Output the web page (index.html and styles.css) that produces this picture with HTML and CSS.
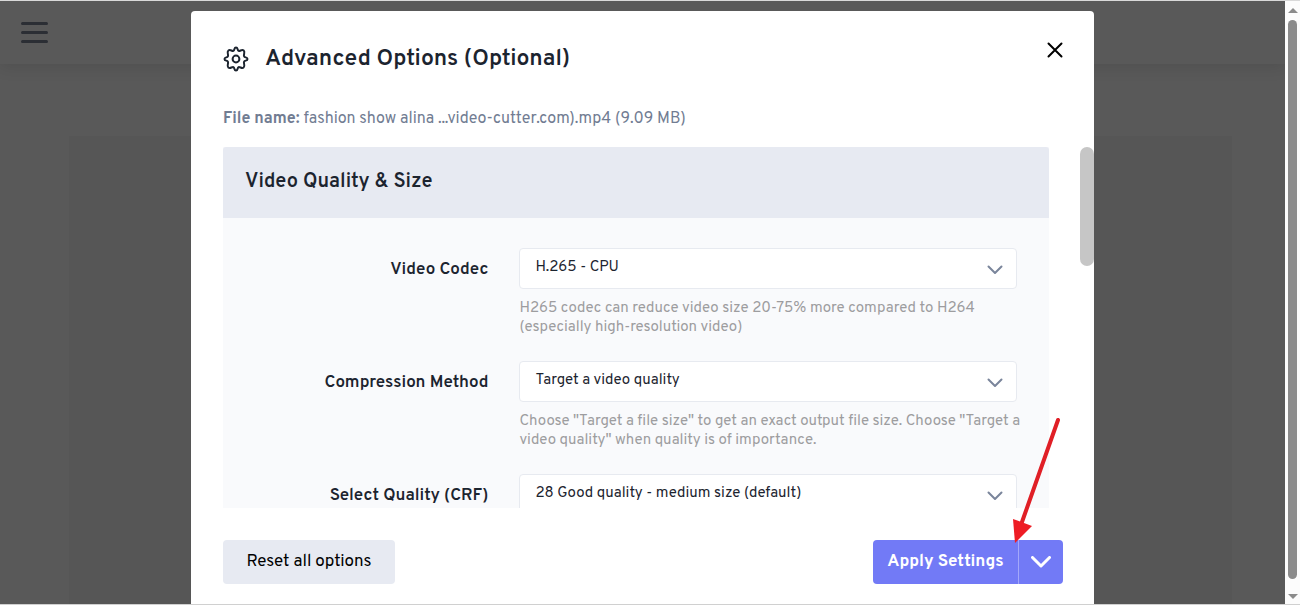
FILE: index.html
```
<!DOCTYPE html>
<html lang="en">
<head>
	<meta charset="UTF-8">
	<title>Advanced Options</title>
	<link rel="stylesheet" href="styles.css">
</head>
<body>
	<div class="page">
		<header class="topbar">
			<button class="menu-btn" type="button" aria-label="Menu"><span></span><span></span><span></span></button>
		</header>
		<main class="content"></main>
		<div class="overlay">
			<form class="modal" role="dialog" aria-labelledby="modal-title">
				<div class="modal-header">
					<svg class="gear" viewBox="0 0 26 26" aria-hidden="true">
						<path d="M10.4 4.9 C11.8 4.2 10.9 1.5 13 1.5 S14.2 4.2 15.6 4.9 C17.2 5.4 18.9 2.9 20.7 4.6 S20.2 8.6 21.1 10.4 C21.8 11.8 24.5 10.9 24.5 13 S21.8 14.2 21.1 15.6 C20.2 17.4 22.5 19.6 20.7 21.4 S17.2 20.6 15.6 21.1 C14.2 21.8 15.1 24.5 13 24.5 S11.8 21.8 10.4 21.1 C8.8 20.6 7.1 23.1 5.3 21.4 S5.8 17.4 4.9 15.6 C4.2 14.2 1.5 15.1 1.5 13 S4.2 11.8 4.9 10.4 C5.8 8.6 3.5 6.4 5.3 4.6 S8.8 5.4 10.4 4.9 Z"/>
						<circle cx="13" cy="13" r="3.4"/>
					</svg>
					<h2 id="modal-title">Advanced Options (Optional)</h2>
					<button class="close-btn" type="button" aria-label="Close">
						<svg viewBox="0 0 16 16"><path d="M1.5 1.5 L14.5 14.5 M14.5 1.5 L1.5 14.5"/></svg>
					</button>
				</div>
				<p class="file-name"><b>File name:</b> fashion show alina ...video-cutter.com).mp4 (9.09 MB)</p>
				<div class="modal-body">
					<section class="options">
						<h3>Video Quality &amp; Size</h3>
						<div class="option">
							<label for="codec">Video Codec</label>
							<div class="field">
								<div class="select-box">
									<select id="codec"><option>H.265 - CPU</option></select>
									<svg class="chevron" viewBox="0 0 16 10"><path d="M1.5 1.5 L8 8 L14.5 1.5"/></svg>
								</div>
								<p class="hint">H265 codec can reduce video size 20-75% more compared to H264 (especially high-resolution video)</p>
							</div>
						</div>
						<div class="option">
							<label for="method">Compression Method</label>
							<div class="field">
								<div class="select-box">
									<select id="method"><option>Target a video quality</option></select>
									<svg class="chevron" viewBox="0 0 16 10"><path d="M1.5 1.5 L8 8 L14.5 1.5"/></svg>
								</div>
								<p class="hint">Choose "Target a file size" to get an exact output file size. Choose "Target a video quality" when quality is of importance.</p>
							</div>
						</div>
						<div class="option">
							<label for="crf">Select Quality (CRF)</label>
							<div class="field">
								<div class="select-box">
									<select id="crf"><option>28 Good quality - medium size (default)</option></select>
									<svg class="chevron" viewBox="0 0 16 10"><path d="M1.5 1.5 L8 8 L14.5 1.5"/></svg>
								</div>
							</div>
						</div>
					</section>
					<div class="modal-scroll"></div>
				</div>
				<div class="modal-footer">
					<button class="reset-btn" type="button">Reset all options</button>
					<div class="apply">
						<button class="apply-btn" type="submit">Apply Settings</button>
						<button class="apply-more" type="button" aria-label="More">
							<svg viewBox="0 0 20 12"><path d="M1.5 1.5 L10 10 L18.5 1.5"/></svg>
						</button>
						<svg class="pointer" viewBox="0 0 56 130" aria-hidden="true">
							<path class="pointer-line" d="M50 6 L14 108"/>
							<path class="pointer-head" d="M7 129 L5 105 L24 112 Z"/>
						</svg>
					</div>
				</div>
			</form>
		</div>
	</div>
	<div class="window-scroll">
		<span class="arrow-up"></span>
		<span class="window-thumb"></span>
		<span class="arrow-down"></span>
	</div>
</body>
</html>
```
FILE: styles.css
```
*{
	box-sizing: border-box;
}
body{
	margin: 0;
	height: 100vh;
	display: flex;
	border-top: 1px solid #d9d9d9;
	border-bottom: 1px solid #d0d0d0;
	font-family: Overpass, Roboto, "Liberation Sans", sans-serif;
	color: #1c242f;
}
h2,h3,p{
	margin: 0;
}
button,select{
	font-family: inherit;
	cursor: pointer;
}
svg{
	display: block;
	fill: none;
	stroke-linecap: round;
	stroke-linejoin: round;
}
.page{
	position: relative;
	flex: 1;
	display: flex;
	flex-direction: column;
	background: #595959;
	overflow: hidden;
}
.topbar{
	height: 63px;
	padding: 21px;
	background: #595959;
	box-shadow: 0 2px 16px rgba(0,0,0,.12);
}
.menu-btn{
	display: flex;
	flex-direction: column;
	gap: 6px;
	width: 27px;
	padding: 0;
	border: 0;
	background: none;
}
.menu-btn span{
	height: 3px;
	border-radius: 2px;
	background: #2b2e34;
}
.content{
	flex: 1;
	margin: 72px 53px 0 69px;
	background: #565656;
}
.overlay{
	position: absolute;
	inset: 0;
	display: flex;
	justify-content: center;
	padding: 10px 16px 0;
}
.modal{
	display: flex;
	flex-direction: column;
	width: 100%;
	max-width: 903px;
	padding: 0 0 20px 32px;
	border-radius: 4px 4px 0 0;
	background: #fff;
}
.modal-header{
	display: flex;
	align-items: center;
	gap: 16px;
	height: 96px;
	padding-right: 31px;
}
.gear{
	width: 26px;
	height: 26px;
	stroke: #1c242f;
	stroke-width: 2;
}
.modal-header h2{
	flex: 1;
	font-size: 23px;
	font-weight: 600;
}
.close-btn{
	align-self: flex-start;
	margin-top: 31px;
	padding: 0;
	border: 0;
	background: none;
}
.close-btn svg{
	width: 16px;
	height: 16px;
	stroke: #000;
	stroke-width: 2;
}
.file-name{
	height: 40px;
	font-size: 16px;
	line-height: 24px;
	color: #717c92;
}
.modal-body{
	flex: 1;
	display: flex;
	justify-content: space-between;
	gap: 31px;
	min-height: 0;
	overflow: hidden;
}
.modal-scroll{
	width: 14px;
	height: 119px;
	border-radius: 7px;
	background: #c6c6c6;
}
.options{
	flex: 1;
	background: #f9fafc;
}
.options h3{
	height: 71px;
	margin-bottom: 30px;
	padding: 22px;
	border-radius: 3px 3px 0 0;
	background: #e7eaf2;
	font-size: 20px;
	line-height: 26px;
	font-weight: 600;
}
.option{
	display: grid;
	grid-template-columns: 8fr 15fr;
	column-gap: 31px;
	margin-bottom: 24px;
	padding-right: 32px;
}
.option label{
	text-align: right;
	font-size: 17px;
	line-height: 44px;
	font-weight: 600;
}
.select-box{
	position: relative;
}
.select-box select{
	appearance: none;
	width: 100%;
	height: 41px;
	padding: 0 48px 3px 15px;
	border: 1px solid #e7eaf0;
	border-radius: 4px;
	background: #fff;
	font-size: 15px;
	color: #1c242f;
}
.chevron{
	position: absolute;
	right: 14px;
	top: 17px;
	width: 16px;
	height: 10px;
	stroke: #7a859b;
	stroke-width: 2;
	pointer-events: none;
}
.hint{
	margin: 10px -16px 0 0;
	font-size: 15px;
	line-height: 19px;
	color: #9d9d9f;
}
.modal-footer{
	display: flex;
	justify-content: space-between;
	padding: 32px 31px 0 0;
}
.modal-footer button{
	height: 44px;
	border: 0;
	font-size: 17px;
}
.modal-footer .reset-btn{
	width: 172px;
	border-radius: 4px;
	background: #e7eaf2;
	color: #000;
}
.apply{
	position: relative;
	display: flex;
}
.modal-footer .apply-btn{
	width: 145px;
	border-radius: 4px 0 0 4px;
	background: #727af6;
	color: #fff;
	font-weight: 700;
}
.modal-footer .apply-more{
	display: flex;
	align-items: center;
	justify-content: center;
	width: 45px;
	padding: 0;
	border-left: 1px solid #a3a8fa;
	border-radius: 0 4px 4px 0;
	background: #727af6;
}
.apply-more svg{
	width: 20px;
	height: 12px;
	stroke: #fff;
	stroke-width: 3;
}
.pointer{
	position: absolute;
	right: -1px;
	bottom: 40px;
	width: 56px;
	height: 130px;
	pointer-events: none;
}
.pointer-line{
	stroke: #e01f26;
	stroke-width: 4;
}
.pointer-head{
	fill: #ee1c24;
}
.window-scroll{
	display: flex;
	flex-direction: column;
	align-items: center;
	gap: 7px;
	width: 15px;
	padding: 7px 0 5px;
	background: #fcfcfc;
}
.window-thumb{
	flex: 1;
	width: 9px;
	margin-bottom: 8px;
	border-radius: 5px;
	background: #8b8b8b;
}
.arrow-up,.arrow-down{
	border: 5px solid transparent;
}
.arrow-up{
	border-top: 0;
	border-bottom-color: #8b8b8b;
}
.arrow-down{
	border-bottom: 0;
	border-top-color: #8b8b8b;
}
```
